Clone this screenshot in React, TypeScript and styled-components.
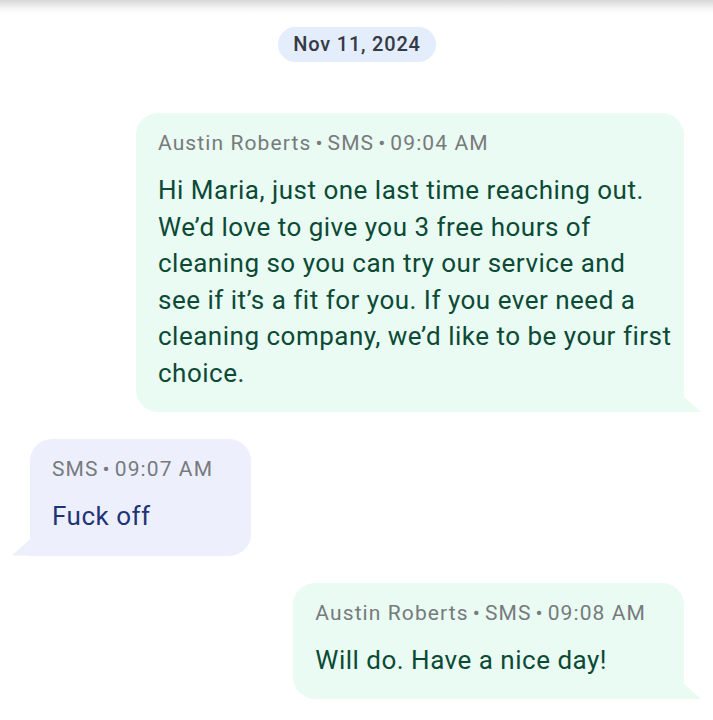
import React from "react";
import styled, { createGlobalStyle } from "styled-components";

const Global = createGlobalStyle`
  html, body { margin: 0; padding: 0; background: #ffffff; }
  body { font-family: Roboto, "Noto Sans", Arial, sans-serif; }
`;

const Page = styled.div`
  width: 713px;
  min-height: 720px;
  background: #ffffff;
  position: relative;
  overflow: hidden;
`;

const TopShadow = styled.div`
  height: 14px;
  margin-bottom: -14px;
  background: linear-gradient(to bottom, rgba(0,0,0,0.16), rgba(0,0,0,0.04) 60%, rgba(0,0,0,0));
`;

const Thread = styled.div`
  display: flex;
  flex-direction: column;
  padding: 27px 29px 0 30px;
`;

const DateRow = styled.div`
  display: flex;
  justify-content: center;
  margin-bottom: 51px;
`;

const DatePill = styled.div`
  background: #e3edfb;
  color: #353a45;
  font-family: "Roboto Medium", Roboto, sans-serif;
  font-size: 20px;
  font-weight: 500;
  letter-spacing: 0.8px;
  height: 35px;
  line-height: 35px;
  padding: 0 15px;
  border-radius: 18px;
`;

const Row = styled.div<{ $out?: boolean }>`
  display: flex;
  justify-content: ${(p) => (p.$out ? "flex-end" : "flex-start")};
  margin-bottom: 27px;
`;

const Bubble = styled.div<{ $out?: boolean }>`
  position: relative;
  max-width: 548px;
  background: ${(p) => (p.$out ? "#e9fbf2" : "#edf0fc")};
  border-radius: ${(p) => (p.$out ? "22px 22px 0 22px" : "22px 22px 22px 0")};
  padding: 16px 11px 21px 22px;
  box-sizing: border-box;
  &::after {
    content: "";
    position: absolute;
    bottom: 0;
    ${(p) => (p.$out ? "right: -17px;" : "left: -18px;")}
    width: 18px;
    height: 16px;
    background: inherit;
    clip-path: ${(p) =>
      p.$out ? "polygon(0 0, 100% 100%, 0 100%)" : "polygon(100% 0, 100% 100%, 0 100%)"};
  }
`;

const Meta = styled.div`
  color: #777a7c;
  font-size: 21px;
  line-height: 28px;
  letter-spacing: 1.1px;
  margin-bottom: 15px;
  padding-right: 27px;
  white-space: nowrap;
`;

const Dot = styled.span`
  margin: 0 4px;
`;

const Body = styled.div<{ $out?: boolean }>`
  color: ${(p) => (p.$out ? "#0c4a36" : "#1d3475")};
  font-size: 26px;
  line-height: 36.5px;
  letter-spacing: 0.5px;
`;

type Msg = { out: boolean; meta: string[]; text: string };

const messages: Msg[] = [
  {
    out: true,
    meta: ["Austin Roberts", "SMS", "09:04 AM"],
    text:
      "Hi Maria, just one last time reaching out. We\u2019d love to give you 3 free hours of cleaning so you can try our service and see if it\u2019s a fit for you. If you ever need a cleaning company, we\u2019d like to be your first choice.",
  },
  { out: false, meta: ["SMS", "09:07 AM"], text: "Fuck off" },
  { out: true, meta: ["Austin Roberts", "SMS", "09:08 AM"], text: "Will do. Have a nice day!" },
];

export default function App() {
  return (
    <Page>
      <Global />
      <TopShadow />
      <Thread>
        <DateRow>
          <DatePill>Nov 11, 2024</DatePill>
        </DateRow>
        {messages.map((m, i) => (
          <Row key={i} $out={m.out}>
            <Bubble $out={m.out}>
              <Meta>
                {m.meta.map((part, j) => (
                  <React.Fragment key={j}>
                    {j > 0 && <Dot>•</Dot>}
                    {part}
                  </React.Fragment>
                ))}
              </Meta>
              <Body $out={m.out}>{m.text}</Body>
            </Bubble>
          </Row>
        ))}
      </Thread>
    </Page>
  );
}
